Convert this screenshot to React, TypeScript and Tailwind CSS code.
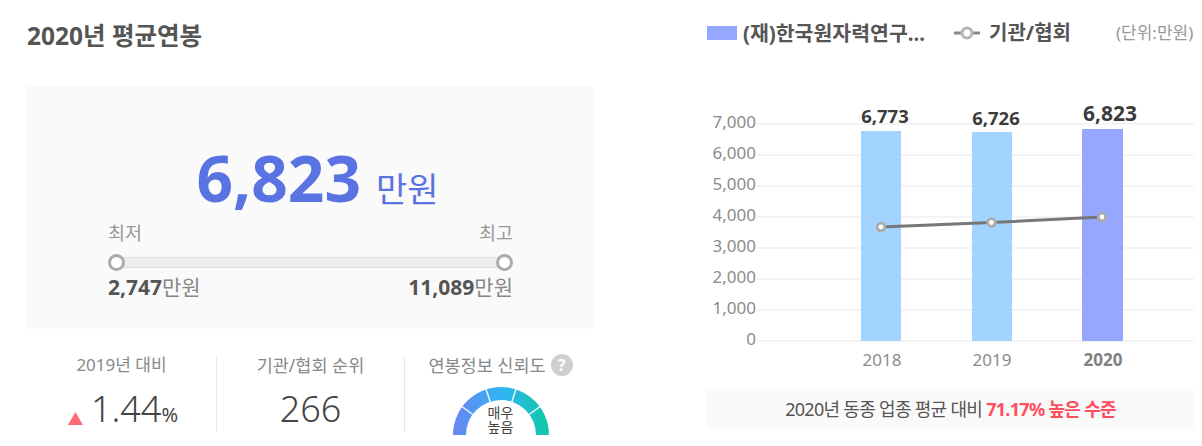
import React from "react";

const grid = [
  { v: "7,000", y: 124 },
  { v: "6,000", y: 155 },
  { v: "5,000", y: 186 },
  { v: "4,000", y: 217 },
  { v: "3,000", y: 248 },
  { v: "2,000", y: 279 },
  { v: "1,000", y: 310 },
  { v: "0", y: 341 },
];

function polar(r: number, deg: number) {
  const a = (deg * Math.PI) / 180;
  return [48 - r * Math.cos(a), 48 - r * Math.sin(a)];
}

function Gauge() {
  const segs = [0, 36, 72, 108, 144];
  return (
    <div className="relative w-[96px] h-[48px]">
      <svg width="96" height="48" viewBox="0 0 96 48" className="block">
        <defs>
          <linearGradient id="g" x1="0" y1="0" x2="1" y2="0">
            <stop offset="0" stopColor="#6c84f2" />
            <stop offset="0.5" stopColor="#31b4f5" />
            <stop offset="1" stopColor="#0fc9a6" />
          </linearGradient>
        </defs>
        <path d="M0 48 A48 48 0 0 1 96 48 L83 48 A35 35 0 0 0 13 48 Z" fill="url(#g)" />
        {segs.slice(1).map((d) => {
          const [x1, y1] = polar(34, d);
          const [x2, y2] = polar(49, d);
          return <line key={d} x1={x1} y1={y1} x2={x2} y2={y2} stroke="#e8f4fb" strokeWidth="1.5" />;
        })}
      </svg>
      <div className="absolute left-0 right-0 top-[19px] text-center text-[14px] text-[#444]">
        <div className="h-[14px] leading-[14px]">매우</div>
        <div className="h-[14px] leading-[14px]">높음</div>
      </div>
    </div>
  );
}

function Chart() {
  const bars = [
    { x: 861, y: 131, w: 40, c: "#a3d4ff" },
    { x: 972, y: 132, w: 40, c: "#a3d4ff" },
    { x: 1082, y: 129, w: 41, c: "#95a7ff" },
  ];
  return (
    <svg width="495" height="300" viewBox="707 95 495 300" className="block" fontFamily="'Noto Sans','Noto Sans CJK KR',sans-serif">
      {grid.map((g) => (
        <g key={g.v}>
          <line x1="757" x2="1194" y1={g.y} y2={g.y} stroke="#f1f1f3" strokeWidth="1.5" />
          <text x="756" y={g.y + 4} textAnchor="end" fontSize="17" fill="#8c8c8c">
            {g.v}
          </text>
        </g>
      ))}
      {bars.map((b) => (
        <rect key={b.x} x={b.x} y={b.y} width={b.w} height={341 - b.y} fill={b.c} />
      ))}
      <text x="885" y="123" textAnchor="middle" fontSize="18.5" fontWeight="700" fill="#3c3c3c">6,773</text>
      <text x="996" y="125" textAnchor="middle" fontSize="18.5" fontWeight="700" fill="#3c3c3c">6,726</text>
      <text x="1110" y="121" textAnchor="middle" fontSize="21" fontWeight="700" fill="#3c3c3c">6,823</text>
      <polyline points="881,227 991.5,222.5 1102,217" fill="none" stroke="#777" strokeWidth="3" />
      {[[881, 227], [991.5, 222.5], [1102, 217]].map(([x, y]) => (
        <circle key={x} cx={x} cy={y} r="3.8" fill="#fff" stroke="#ababab" strokeWidth="2.8" />
      ))}
      <text x="882" y="366" textAnchor="middle" fontSize="17" fill="#8c8c8c">2018</text>
      <text x="992" y="366" textAnchor="middle" fontSize="17" fill="#8c8c8c">2019</text>
      <text x="1103" y="366" textAnchor="middle" fontSize="17" fontWeight="700" fill="#808080">2020</text>
    </svg>
  );
}

function Knob() {
  return <div className="w-[17px] h-[17px] rounded-full bg-white border-[3px] border-[#ababab] shrink-0" />;
}

export default function App() {
  return (
    <div className="w-[1202px] h-[446px] overflow-hidden bg-white flex font-['Noto_Sans','Noto_Sans_CJK_KR',sans-serif]">
      <div className="ml-[27px] w-[566px] shrink-0">
        <h2 className="mt-[19px] h-[33px] text-[24.5px] leading-[33px] font-bold text-[#555]">2020년 평균연봉</h2>
        <div className="mt-[34px] h-[243px] bg-[#fafafa] pl-[81px] pr-[80px] pt-[50px]">
          <div className="flex items-baseline justify-center h-[84px] pl-[14px] text-[#5a73e2]">
            <span className="text-[64px] leading-[84px] font-bold mr-[15px]">6,823</span>
            <span className="text-[34px] leading-[40px]">만원</span>
          </div>
          <div className="mt-[1px] flex justify-between text-[18.5px] leading-[24px] text-[#999]">
            <span>최저</span>
            <span>최고</span>
          </div>
          <div className="relative mt-[9px] flex justify-between items-center h-[17px]">
            <div className="absolute left-[4px] right-[4px] top-[3px] h-[11px] bg-[#eeeeee] border border-[#dddddd]" />
            <div className="relative"><Knob /></div>
            <div className="relative"><Knob /></div>
          </div>
          <div className="mt-[1px] flex justify-between items-baseline text-[#555] leading-[30px]">
            <span className="text-[21px] font-bold">2,747<span className="text-[21px] font-normal text-[#888]">만원</span></span>
            <span className="text-[21px] font-bold">11,089<span className="text-[21px] font-normal text-[#888]">만원</span></span>
          </div>
        </div>
        <div className="mt-[28px] h-[78px] flex">
          <div className="w-[190px] border-r border-[#e8e8e8] text-center h-[75px]">
            <div className="-mt-[2px] text-[17px] leading-[20px] text-[#888]">2019년 대비</div>
            <div className="mt-[12px] flex items-baseline justify-center text-[#444] leading-[44px]">
              <span className="w-[15px] h-[13px] ml-[3px] mr-[8px] translate-y-[3px] bg-[#ff6b75] [clip-path:polygon(50%_0,100%_100%,0_100%)]" />
              <span className="text-[36px] font-light">1.44</span>
              <span className="text-[20px] font-normal">%</span>
            </div>
          </div>
          <div className="w-[188px] border-r border-[#e8e8e8] text-center h-[75px]">
            <div className="-mt-[2px] text-[17.5px] leading-[20px] text-[#888]">기관/협회 순위</div>
            <div className="mt-[12px] text-[36px] leading-[44px] font-light text-[#444]">266</div>
          </div>
          <div className="flex-1 flex flex-col items-center pl-[3px]">
            <div className="-mt-[2px] flex items-center h-[20px] text-[17.5px] leading-[20px] text-[#888]">
              연봉정보 신뢰도
              <span className="ml-[5px] w-[22px] h-[22px] shrink-0 rounded-full bg-[#cfcfcf] text-white text-[16px] leading-[22px] font-bold flex items-center justify-center">?</span>
            </div>
            <div className="mt-[12px]"><Gauge /></div>
          </div>
        </div>
      </div>
      <div className="ml-[114px] w-[495px] shrink-0">
        <div className="mt-[20px] h-[26px] flex items-center text-[20px] leading-[26px] font-bold text-[#555]">
          <span className="w-[30px] h-[14px] bg-[#95a7ff] mr-[6px]" />
          <span className="text-[20.5px]">(재)한국원자력연구...</span>
          <svg width="28" height="14" viewBox="0 0 28 14" className="ml-[28px] mr-[8px]">
            <line x1="1" x2="27" y1="7" y2="7" stroke="#888" strokeWidth="3" />
            <circle cx="14" cy="7" r="5" fill="#fff" stroke="#b5b5b5" strokeWidth="3" />
          </svg>
          <span>기관/협회</span>
          <span className="ml-[45px] text-[17px] font-normal text-[#999]">(단위:만원)</span>
        </div>
        <div className="mt-[49px]"><Chart /></div>
        <div className="-mt-[6px] w-[487px] h-[40px] bg-[#fafafa] flex items-center justify-center text-[18px] tracking-[-0.7px] text-[#555]">
          <span>2020년 동종 업종 평균 대비&nbsp;</span>
          <span className="font-bold text-[#ff4f5e]">71.17% 높은 수준</span>
        </div>
      </div>
    </div>
  );
}
